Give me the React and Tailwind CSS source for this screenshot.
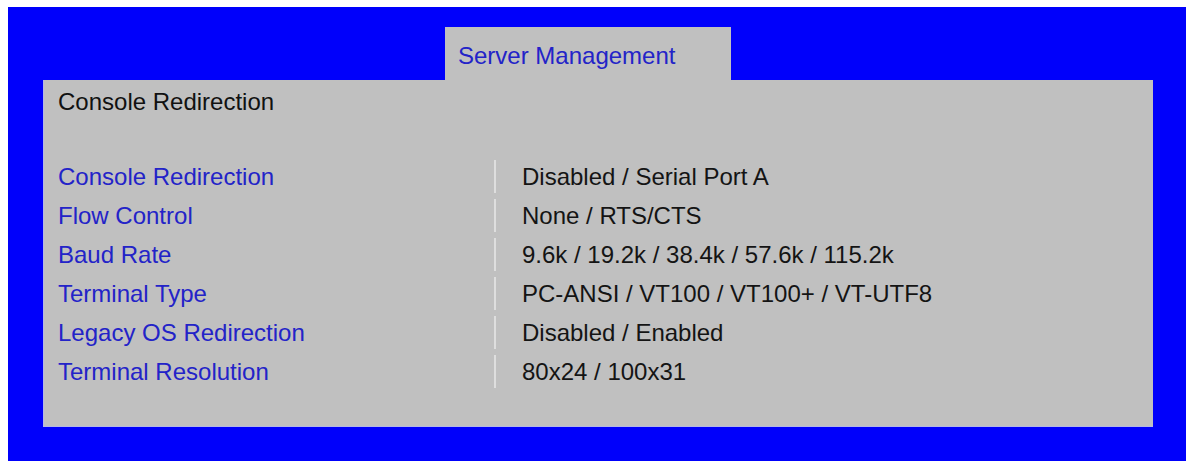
import React from "react";

const rows = [
  ["Console Redirection", "Disabled / Serial Port A"],
  ["Flow Control", "None / RTS/CTS"],
  ["Baud Rate", "9.6k / 19.2k / 38.4k / 57.6k / 115.2k"],
  ["Terminal Type", "PC-ANSI / VT100 / VT100+ / VT-UTF8"],
  ["Legacy OS Redirection", "Disabled / Enabled"],
  ["Terminal Resolution", "80x24 / 100x31"],
];

export default function App() {
  return (
    <div
      className="w-[1190px] h-[462px] bg-white pt-[7px] pl-[8px] pr-[4px] pb-[1px]"
      style={{ fontFamily: '"Liberation Sans", Arial, sans-serif' }}
    >
      <div className="h-[454px] bg-[#0000fb] pt-[20px] pl-[35px] pr-[33px] pb-[34px] flex flex-col">
        {/* tab strip */}
        <div className="flex">
          <div className="ml-[402px] w-[286px] h-[53px] bg-[#c0c0c0] pt-[9px] pl-[13px] text-[24px] leading-[39px] text-[#2323c8]">
            Server Management
          </div>
        </div>
        {/* setup page body */}
        <div className="flex-1 bg-[#c0c0c0] border-l border-b border-[#b4b8e6] pt-[2px] pl-[14px] flex flex-col">
          <div className="text-[24px] leading-[39px] text-[#111111]">Console Redirection</div>
          <div className="mt-[36px] flex flex-col">
            {rows.map(([label, value]) => (
              <div key={label} className="flex h-[39px] text-[24px] leading-[39px]">
                <div className="w-[436px] text-[#2323c8]">{label}</div>
                <div className="w-[2px] my-[3px] bg-[#dedede]" />
                <div className="pl-[26px] text-[#141414]">{value}</div>
              </div>
            ))}
          </div>
        </div>
      </div>
    </div>
  );
}
